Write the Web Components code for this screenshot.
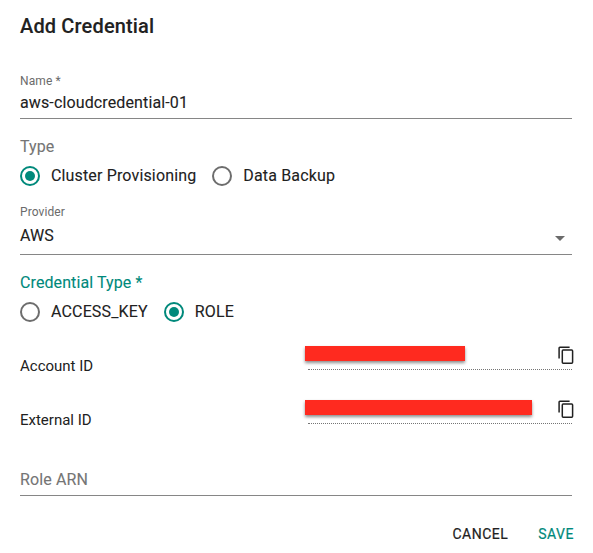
<!DOCTYPE html>
<html lang="en">
<head>
<meta charset="utf-8">
<title>Add Credential</title>
<style>
body { margin: 0; background: #fff; color: #212121; font: 16px/20px Roboto, "Liberation Sans", sans-serif; -webkit-text-stroke: .1px currentColor; }
</style>
</head>
<body>
<credential-form></credential-form>
<script>
const define = (name, html) => customElements.define(name, class extends HTMLElement {
  connectedCallback() {
    if (this.shadowRoot) return;
    const t = document.createElement('template');
    t.innerHTML = html;
    this.attachShadow({ mode: 'open' }).append(t.content.cloneNode(true));
  }
});

define('text-field', `
<style>
:host { display: flex; flex-direction: column; box-sizing: border-box; border-bottom: 1px solid #868686; }
.label { font-size: 12px; line-height: 18px; color: #6b6b6b; letter-spacing: .1px; -webkit-text-stroke: 0; }
.value { display: flex; justify-content: space-between; line-height: 25px; letter-spacing: .13px; }
:host([placeholder]) .label { display: none; }
:host([placeholder]) .value { color: #757575; }
:host([select]) .value { margin-top: 2px; }
svg { display: none; width: 24px; height: 24px; fill: #6b6b6b; margin-top: 3px; }
:host([select]) svg { display: block; }
</style>
<div class="label"><slot name="label"></slot></div>
<div class="value"><slot></slot><svg viewBox="0 0 24 24"><path d="M7 10l5 5 5-5z"/></svg></div>`);

define('radio-option', `
<style>
:host { display: flex; align-items: center; gap: 11px; height: 20px; letter-spacing: .15px; white-space: nowrap; }
i { box-sizing: border-box; width: 20px; height: 20px; border: 2px solid #6d6d6d; border-radius: 50%; display: grid; place-items: center; }
:host([checked]) i { border-color: #00897b; }
:host([checked]) i::after { content: ""; width: 10px; height: 10px; border-radius: 50%; background: #00897b; }
span { position: relative; top: -.5px; }
</style>
<i></i><span><slot></slot></span>`);

define('radio-set', `
<style>
:host { display: block; }
.legend { line-height: 20px; letter-spacing: .1px; color: var(--legend, #757575); }
.options { display: flex; gap: 16px; margin-top: 9px; }
</style>
<div class="legend"><slot name="legend"></slot></div>
<div class="options"><slot></slot></div>`);

define('secret-row', `
<style>
:host { display: grid; grid-template-columns: 285px 1fr; height: 54px; }
.name { font-size: 15px; line-height: 20px; padding-top: 13px; letter-spacing: 0; -webkit-text-stroke: 0; }
.box { display: flex; justify-content: space-between; align-items: flex-start; height: 27px; margin-left: 3px; box-sizing: border-box;
  border-bottom: 1px dotted #757575; }
.bar { width: var(--bar); height: 15px; margin: 3px 0 0 -3px; background: #ff2a1f; box-shadow: 0 2px 3px rgba(0,0,0,.45); }
svg { width: 18px; height: 20px; margin: 2px -3px 0 0; fill: none; stroke: #212121; stroke-width: 1.5; }
</style>
<div class="name"><slot></slot></div>
<div class="box"><div class="bar"></div>
<svg viewBox="0 0 18 20"><path d="M2.1 13.6V3q0-.8.8-.8H12.6"/><rect x="5.3" y="5.1" width="10.3" height="13.1" rx=".9"/></svg></div>`);

define('text-button', `
<style>
:host { display: block; }
button { all: unset; display: block; font-size: 14px; line-height: 20px; letter-spacing: .5px; font-weight: 400; color: inherit; -webkit-text-stroke: .2px currentColor; }
</style>
<button><slot></slot></button>`);

define('credential-form', `
<style>
:host { display: flex; flex-direction: column; box-sizing: border-box; width: 593px; height: 553px; padding: 10px 21px 0 20px; }
h1 { margin: 0 0 30px; font-size: 20px; line-height: 32px; font-weight: 500; letter-spacing: .15px; }
.name { height: 47px; }
.type { margin-top: 18px; }
.provider { height: 52px; margin-top: 17px; }
.kind { margin-top: 18px; --legend: #00897b; }
.secrets { margin-top: 21px; }
.arn { height: 29px; margin-top: 16px; }
footer { display: flex; justify-content: flex-end; gap: 30px; margin: 28px -2px 0 0; }
.save { color: #00897b; }
</style>
<h1>Add Credential</h1>
<text-field class="name"><span slot="label">Name *</span>aws-cloudcredential-01</text-field>
<radio-set class="type"><span slot="legend">Type</span><radio-option checked>Cluster Provisioning</radio-option><radio-option>Data Backup</radio-option></radio-set>
<text-field class="provider" select><span slot="label">Provider</span>AWS</text-field>
<radio-set class="kind"><span slot="legend">Credential Type *</span><radio-option>ACCESS_KEY</radio-option><radio-option checked>ROLE</radio-option></radio-set>
<div class="secrets"><secret-row style="--bar:160px">Account ID</secret-row><secret-row style="--bar:227px">External ID</secret-row></div>
<text-field class="arn" placeholder>Role ARN</text-field>
<footer><text-button>CANCEL</text-button><text-button class="save">SAVE</text-button></footer>`);
</script>
</body>
</html>
